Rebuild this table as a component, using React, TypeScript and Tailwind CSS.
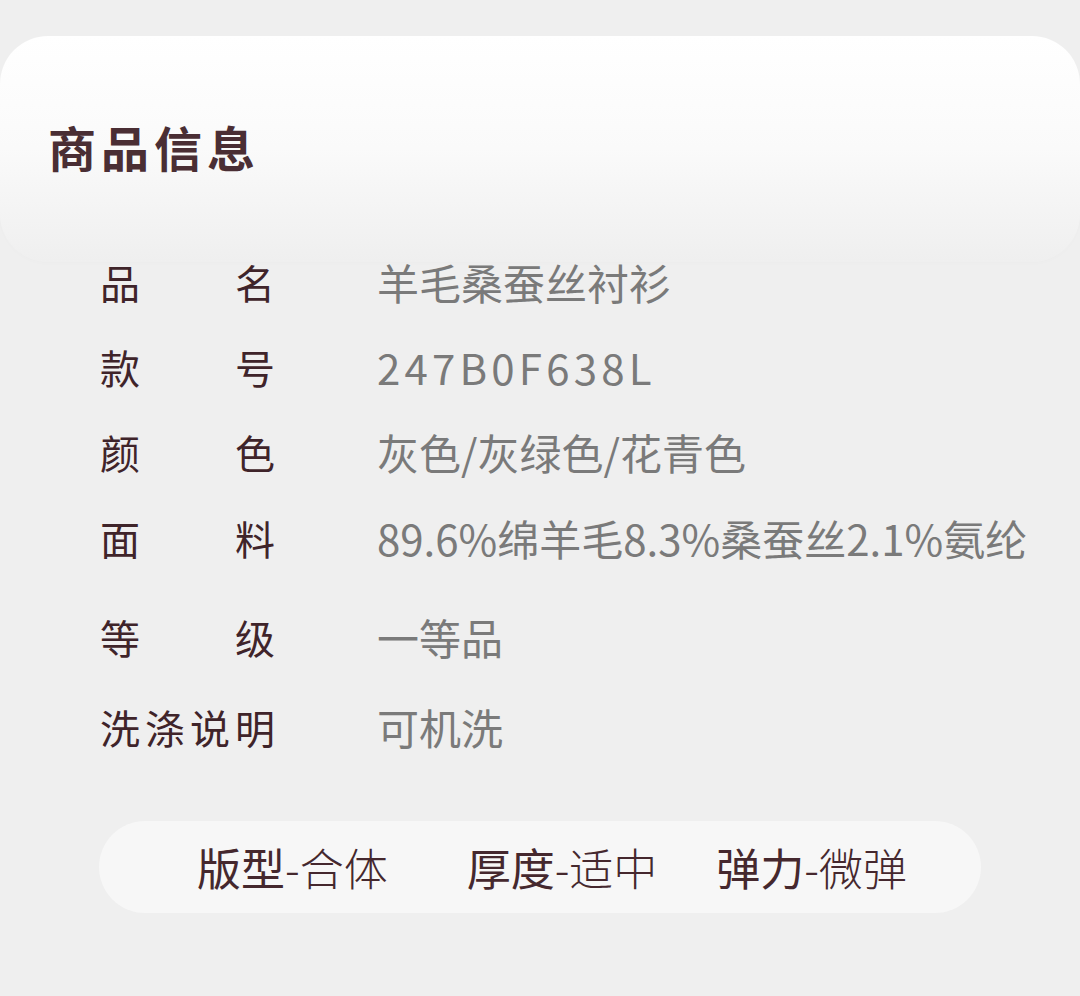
const rows = [
  { label: ["品", "名"], value: "羊毛桑蚕丝衬衫", mt: "mt-0" },
  { label: ["款", "号"], value: "247B0F638L", mt: "mt-[35px]", spaced: true },
  { label: ["颜", "色"], value: "灰色/灰绿色/花青色", mt: "mt-[35px]" },
  { label: ["面", "料"], value: "89.6%绵羊毛8.3%桑蚕丝2.1%氨纶", mt: "mt-[36px]" },
  { label: ["等", "级"], value: "一等品", mt: "mt-[49px]" },
  { label: ["洗", "涤", "说", "明"], value: "可机洗", mt: "mt-[40px]" },
];

const specs = [
  { key: "版型", val: "合体", ml: "ml-0" },
  { key: "厚度", val: "适中", ml: "ml-[79px]" },
  { key: "弹力", val: "微弹", ml: "ml-[59px]" },
];

const App = () => {
  return (
    <div
      className="min-h-[996px] w-[1080px] bg-[#efefef] pt-[36px]"
      style={{ fontFamily: '"Noto Sans CJK SC", "Noto Sans", sans-serif' }}
    >
      {/* Header card */}
      <div className="h-[226px] rounded-[48px] bg-gradient-to-b from-white via-[#fafafa] to-[#efefef] shadow-[0_2px_4px_rgba(0,0,0,0.012)] pl-[48px] pt-[82px]">
        <h1 className="text-[48px] leading-[56px] font-bold tracking-[5px] text-[#4a2e34]">
          商品信息
        </h1>
      </div>

      {/* Info rows */}
      <div className="pl-[100px] -mt-[5px]">
        {rows.map((row, i) => (
          <div key={i} className={`flex items-center h-[50px] ${row.mt}`}>
            <div className="w-[175px] flex justify-between text-[40px] leading-[50px] text-[#3f242a]">
              {row.label.map((c, j) => (
                <span key={j}>{c}</span>
              ))}
            </div>
            <div
              className={`ml-[102px] text-[42px] leading-[50px] font-normal text-[#7a7a7a] whitespace-nowrap ${
                row.spaced ? "tracking-[4.2px]" : ""
              }`}
            >
              {row.value}
            </div>
          </div>
        ))}
      </div>

      {/* Spec pill */}
      <div className="mt-[69px] ml-[99px] w-[882px] h-[92px] rounded-full bg-[#f7f7f7] flex items-center pl-[98px]">
        {specs.map((s, i) => (
          <div key={i} className={`flex items-center text-[44px] leading-[50px] text-[#45282e] ${s.ml}`}>
            <span className="font-normal">{s.key}</span>
            <span className="font-light">-{s.val}</span>
          </div>
        ))}
      </div>
    </div>
  );
};

export default App;
